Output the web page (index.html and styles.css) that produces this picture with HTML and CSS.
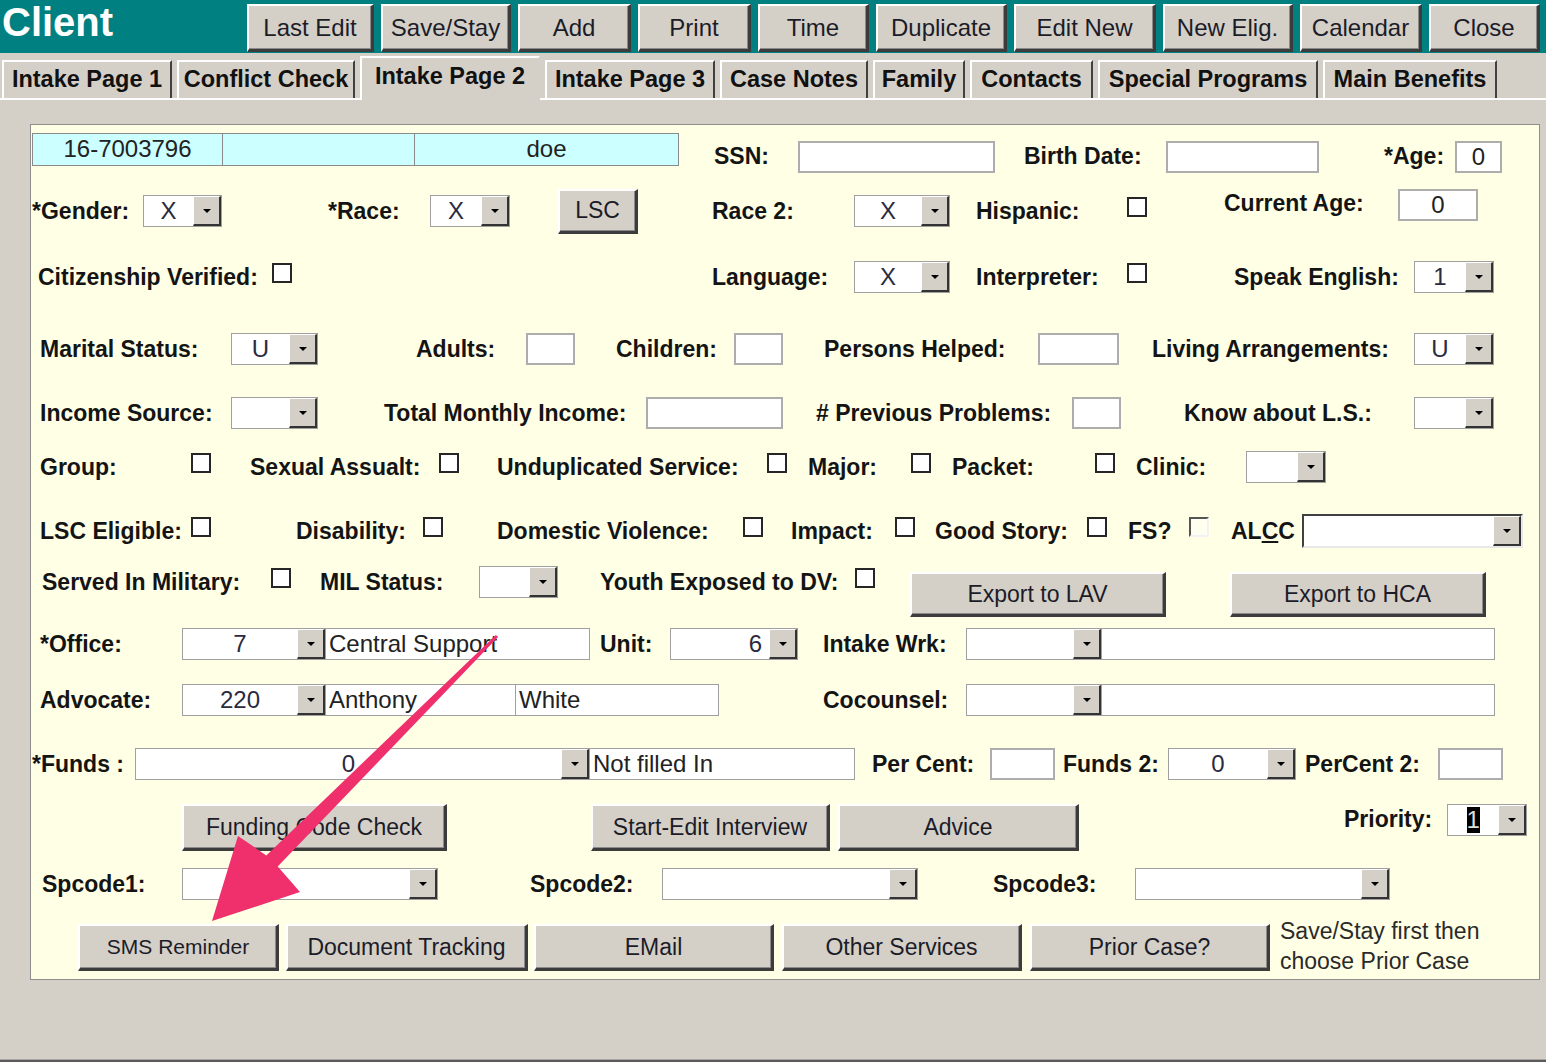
FILE: index.html
```html
<!DOCTYPE html>
<html>
<head>
<meta charset="utf-8">
<title>Client</title>
<link rel="stylesheet" href="styles.css">
</head>
<body>
<div class="topbar">
  <div class="title">Client</div>
  <div class="toolbar">
    <div class="btn tb">Last Edit</div>
    <div class="btn tb">Save/Stay</div>
    <div class="btn tb">Add</div>
    <div class="btn tb">Print</div>
    <div class="btn tb">Time</div>
    <div class="btn tb">Duplicate</div>
    <div class="btn tb">Edit New</div>
    <div class="btn tb">New Elig.</div>
    <div class="btn tb">Calendar</div>
    <div class="btn tb">Close</div>
  </div>
</div>

<div class="tabs">
  <div class="tab">Intake Page 1</div>
  <div class="tab">Conflict Check</div>
  <div class="tab sel-tab">Intake Page 2</div>
  <div class="tab">Intake Page 3</div>
  <div class="tab">Case Notes</div>
  <div class="tab">Family</div>
  <div class="tab">Contacts</div>
  <div class="tab">Special Programs</div>
  <div class="tab">Main Benefits</div>
  <div class="tab-fill"></div>
</div>

<div class="panel">
  <div class="row r1">
    <div class="idrow"><div class="idc c1">16-7003796</div><div class="idc c2"></div><div class="idc c3">doe</div></div>
    <span class="lb">SSN:</span>
    <div class="inp w197 end"></div>
    <span class="lb">Birth Date:</span>
    <div class="inp w153 end"></div>
    <span class="lb">*Age:</span>
    <div class="inp w47 end">0</div>
  </div>

  <div class="row r2">
    <span class="lb">*Gender:</span>
    <div class="sel w79"><span class="v">X</span><span class="dd"></span></div>
    <span class="lb">*Race:</span>
    <div class="sel w80"><span class="v">X</span><span class="dd"></span></div>
    <div class="btn w80 h45">LSC</div>
    <span class="lb">Race 2:</span>
    <div class="sel w96"><span class="v">X</span><span class="dd"></span></div>
    <span class="lb">Hispanic:</span>
    <div class="cb"></div>
    <span class="lb up8">Current Age:</span>
    <div class="inp w80 up6">0</div>
  </div>

  <div class="row r3">
    <span class="lb">Citizenship Verified:</span>
    <div class="cb"></div>
    <span class="lb">Language:</span>
    <div class="sel w96"><span class="v">X</span><span class="dd"></span></div>
    <span class="lb">Interpreter:</span>
    <div class="cb"></div>
    <span class="lb">Speak English:</span>
    <div class="sel w80"><span class="v">1</span><span class="dd"></span></div>
  </div>

  <div class="row r4">
    <span class="lb">Marital Status:</span>
    <div class="sel w87"><span class="v">U</span><span class="dd"></span></div>
    <span class="lb">Adults:</span>
    <div class="inp w49"></div>
    <span class="lb">Children:</span>
    <div class="inp w49"></div>
    <span class="lb">Persons Helped:</span>
    <div class="inp w81"></div>
    <span class="lb">Living Arrangements:</span>
    <div class="sel w80"><span class="v">U</span><span class="dd"></span></div>
  </div>

  <div class="row r5">
    <span class="lb">Income Source:</span>
    <div class="sel w87"><span class="v"></span><span class="dd"></span></div>
    <span class="lb">Total Monthly Income:</span>
    <div class="inp w137"></div>
    <span class="lb"># Previous Problems:</span>
    <div class="inp w49"></div>
    <span class="lb">Know about L.S.:</span>
    <div class="sel w80"><span class="v"></span><span class="dd"></span></div>
  </div>

  <div class="row r6">
    <span class="lb">Group:</span>
    <div class="cb"></div>
    <span class="lb">Sexual Assualt:</span>
    <div class="cb"></div>
    <span class="lb">Unduplicated Service:</span>
    <div class="cb"></div>
    <span class="lb">Major:</span>
    <div class="cb"></div>
    <span class="lb">Packet:</span>
    <div class="cb"></div>
    <span class="lb">Clinic:</span>
    <div class="sel w80"><span class="v"></span><span class="dd"></span></div>
  </div>

  <div class="row r7">
    <span class="lb">LSC Eligible:</span>
    <div class="cb"></div>
    <span class="lb">Disability:</span>
    <div class="cb"></div>
    <span class="lb">Domestic Violence:</span>
    <div class="cb"></div>
    <span class="lb">Impact:</span>
    <div class="cb"></div>
    <span class="lb">Good Story:</span>
    <div class="cb"></div>
    <span class="lb">FS?</span>
    <div class="cb dis"></div>
    <span class="lb">AL<u>C</u>C</span>
    <div class="sel sunken w221"><span class="v"></span><span class="dd"></span></div>
  </div>

  <div class="row r8">
    <span class="lb">Served In Military:</span>
    <div class="cb"></div>
    <span class="lb">MIL Status:</span>
    <div class="sel w79"><span class="v"></span><span class="dd"></span></div>
    <span class="lb">Youth Exposed to DV:</span>
    <div class="cb"></div>
    <div class="btn w256 h45 down">Export to LAV</div>
    <div class="btn w256 h45 down">Export to HCA</div>
  </div>

  <div class="row r9">
    <span class="lb">*Office:</span>
    <div class="combo">
      <div class="sel w144"><span class="v">7</span><span class="dd"></span></div>
      <div class="txt w264">Central Support</div>
    </div>
    <span class="lb">Unit:</span>
    <div class="sel w128"><span class="v right">6</span><span class="dd"></span></div>
    <span class="lb">Intake Wrk:</span>
    <div class="combo">
      <div class="sel w136"><span class="v"></span><span class="dd"></span></div>
      <div class="txt w393"></div>
    </div>
  </div>

  <div class="row r10">
    <span class="lb">Advocate:</span>
    <div class="combo">
      <div class="sel w144"><span class="v">220</span><span class="dd"></span></div>
      <div class="txt w190">Anthony</div>
      <div class="txt w203">White</div>
    </div>
    <span class="lb">Cocounsel:</span>
    <div class="combo">
      <div class="sel w136"><span class="v"></span><span class="dd"></span></div>
      <div class="txt w393"></div>
    </div>
  </div>

  <div class="row r11">
    <span class="lb">*Funds :</span>
    <div class="combo">
      <div class="sel w455"><span class="v">0</span><span class="dd"></span></div>
      <div class="txt w265">Not filled In</div>
    </div>
    <span class="lb">Per Cent:</span>
    <div class="inp w65"></div>
    <span class="lb">Funds 2:</span>
    <div class="sel w128"><span class="v">0</span><span class="dd"></span></div>
    <span class="lb">PerCent 2:</span>
    <div class="inp w65"></div>
  </div>

  <div class="row r12">
    <div class="btn w265 h47">Funding Code Check</div>
    <div class="btn w239 h47">Start-Edit Interview</div>
    <div class="btn w241 h47">Advice</div>
    <span class="lb prio">Priority:</span>
    <div class="sel w80 top"><span class="v"><span class="hl">1</span></span><span class="dd"></span></div>
  </div>

  <div class="row r13">
    <span class="lb">Spcode1:</span>
    <div class="sel w256"><span class="v"></span><span class="dd"></span></div>
    <span class="lb">Spcode2:</span>
    <div class="sel w256"><span class="v"></span><span class="dd"></span></div>
    <span class="lb">Spcode3:</span>
    <div class="sel w255"><span class="v"></span><span class="dd"></span></div>
  </div>

  <div class="row r14">
    <div class="btn w201 h47 small">SMS Reminder</div>
    <div class="btn w242 h47">Document Tracking</div>
    <div class="btn w240 h47">EMail</div>
    <div class="btn w240 h47">Other Services</div>
    <div class="btn w240 h47">Prior Case?</div>
    <div class="note">Save/Stay first then<br>choose Prior Case</div>
  </div>
</div>

<svg class="arrow" width="1546" height="1062" viewBox="0 0 1546 1062">
  <polygon points="495.9,634.9 266.3,855.4 238,836 212,921 300,892 277.7,866.6 498.1,637.1" fill="#ef306c"/>
</svg>
</body>
</html>
```
FILE: styles.css
```css
* { box-sizing: border-box; }
html, body { margin: 0; padding: 0; }
body {
  width: 1546px;
  height: 1062px;
  background: #d4d0c8;
  font-family: "Liberation Sans", Arial, sans-serif;
  color: #111;
  position: relative;
  overflow: hidden;
  border-bottom: 2px solid #5a5a5a;
  box-shadow: inset 0 -1px 0 #a4a4a4;
}

/* ---------- top bar ---------- */
.topbar {
  display: flex;
  height: 53px;
  background: #008080;
}
.title {
  width: 247px;
  padding-left: 2px;
  font-size: 40px;
  font-weight: bold;
  line-height: 44px;
  color: #fff;
}
.toolbar {
  display: grid;
  grid-template-columns: 127px 130px 113px 113px 111px 131px 142px 130px 122px 111px;
  column-gap: 7px;
  padding-top: 4px;
}
.btn {
  display: flex;
  align-items: center;
  justify-content: center;
  background: #d4d0c8;
  border-style: solid;
  border-width: 2px 3px 3px 2px;
  border-color: #fff #3c3c3c #3c3c3c #fff;
  box-shadow: inset -1px -1px 0 #8a8a8a;
  font-size: 23px;
  color: #1c1c28;
  white-space: nowrap;
}
.tb { height: 48px; font-size: 24px; }

/* ---------- tabs ---------- */
.tabs {
  display: grid;
  grid-template-columns: 170px 178px 180px 170px 148px 92px 123px 220px 174px 1fr;
  column-gap: 5px;
  align-items: end;
  height: 44px;
  margin-top: 3px;
  padding-left: 2px;
  border-bottom: 2px solid #fff;
}
.tab {
  height: 38px;
  border-style: solid;
  border-width: 2px 2px 0 2px;
  border-color: #fff #404040 #fff #fff;
  background: #d4d0c8;
  font-size: 23.5px;
  font-weight: bold;
  line-height: 34px;
  text-align: center;
  white-space: nowrap;
}
.sel-tab {
  height: 44px;
  margin-bottom: -2px;
  border-right-color: #d4d0c8;
  line-height: 36px;
}
.tab-fill { height: 38px; }

/* ---------- panel ---------- */
.panel {
  margin: 24px 0 0 30px;
  width: 1510px;
  height: 856px;
  background: #ffffe6;
  border: 1px solid #8e8e8e;
  padding-top: 8px;
}
.row {
  display: grid;
  grid-template-rows: 100%;
  align-items: center;
  justify-items: start;
}
.r1 { height: 40px; padding-left: 1px; grid-template-columns: 682px 84px 226px 142px 218px 71px auto; }
.r2 { height: 50px; margin-top: 13px; padding-left: 1px; grid-template-columns: 111px 185px 102px 128px 154px 142px 122px 151px 97px 174px auto; }
.r3 { height: 42px; margin-top: 20px; padding-left: 7px; grid-template-columns: 234px 440px 142px 122px 151px 107px 180px auto; }
.r4 { height: 42px; margin-top: 30px; padding-left: 9px; grid-template-columns: 191px 185px 110px 90px 118px 90px 214px 114px 262px auto; }
.r5 { height: 42px; margin-top: 22px; padding-left: 9px; grid-template-columns: 191px 153px 262px 170px 256px 112px 230px auto; }
.r6 { height: 42px; margin-top: 12px; padding-left: 9px; grid-template-columns: 151px 59px 189px 58px 270px 41px 103px 41px 143px 41px 110px auto; }
.r7 { height: 42px; margin-top: 22px; padding-left: 9px; grid-template-columns: 151px 105px 127px 74px 246px 48px 104px 40px 152px 41px 61px 42px 71px auto; }
.r8 { height: 44px; margin-top: 8px; padding-left: 11px; grid-template-columns: 229px 49px 159px 121px 255px 55px 320px auto; }
.r9 { height: 40px; margin-top: 20px; padding-left: 9px; grid-template-columns: 142px 418px 70px 153px 143px auto; }
.r10 { height: 40px; margin-top: 16px; padding-left: 9px; grid-template-columns: 142px 641px 143px auto; }
.r11 { height: 40px; margin-top: 24px; padding-left: 1px; grid-template-columns: 103px 737px 118px 73px 105px 137px 133px auto; }
.r12 { height: 48px; margin-top: 20px; padding-left: 151px; grid-template-columns: 409px 247px 506px 103px auto; align-items: start; }
.r13 { height: 40px; margin-top: 12px; padding-left: 11px; grid-template-columns: 140px 348px 132px 331px 142px auto; }
.r14 { height: 48px; margin-top: 20px; padding-left: 47px; grid-template-columns: 208px 248px 248px 248px 250px auto; align-items: start; }

.lb {
  font-size: 23px;
  font-weight: bold;
  white-space: nowrap;
  color: #141414;
}
.r1 .lb { margin-top: 6px; }
.end { align-self: end; }
.up8 { margin-bottom: 16px; }
.up6 { margin-bottom: 12px; }
.down { align-self: start; margin-top: 12px; }
.prio { margin-top: 2px; }

/* id strip */
.idrow {
  display: flex;
  align-self: start;
  width: 647px;
  height: 33px;
  background: #ccffff;
  border: 1px solid #8a8a8a;
}
.idc {
  height: 100%;
  border-right: 1px solid #8a8a8a;
  font-size: 24px;
  line-height: 30px;
  text-align: center;
  color: #222;
}
.c1 { width: 190px; }
.c2 { width: 192px; }
.c3 { flex: 1; border-right: none; }

/* text inputs */
.inp {
  height: 32px;
  background: #fff;
  border: 2px solid #adadad;
  font-size: 24px;
  line-height: 28px;
  text-align: center;
  color: #222;
}
.txt {
  height: 32px;
  background: #fff;
  border: 1px solid #a0a0a0;
  border-left: none;
  padding-left: 3px;
  font-size: 24px;
  line-height: 30px;
  color: #222;
  white-space: nowrap;
  overflow: hidden;
}
.combo { display: flex; }

/* dropdowns */
.sel {
  display: flex;
  height: 32px;
  background: #fff;
  border: 1px solid #a0a0a0;
  font-size: 24px;
}
.sel .v {
  flex: 1;
  text-align: center;
  line-height: 30px;
  color: #2a2a40;
}
.sel .v.right { text-align: right; padding-right: 7px; }
.dd {
  width: 28px;
  display: flex;
  align-items: center;
  justify-content: center;
  background: #d4d0c8;
  border-style: solid;
  border-width: 1px 2px 2px 1px;
  border-color: #fff #333 #333 #fff;
}
.dd::after {
  content: "";
  border-left: 4px solid transparent;
  border-right: 4px solid transparent;
  border-top: 4px solid #000;
}
.sunken {
  height: 34px;
  border-width: 2px;
  border-color: #404040 #e8e8e8 #e8e8e8 #404040;
}
.top { align-self: start; }
.hl {
  display: inline-block;
  background: #000;
  color: #ddd;
  width: 13px;
  line-height: 26px;
  margin-top: 2px;
}

/* checkboxes */
.cb {
  width: 20px;
  height: 20px;
  background: #fff;
  border: 2px solid #262626;
  margin-bottom: 8px;
}
.cb.dis {
  border-color: #555 #f2f2f2 #f2f2f2 #555;
  background: #fffff0;
}

/* widths */
.w47 { width: 47px; }
.w49 { width: 49px; }
.w65 { width: 65px; }
.w79 { width: 79px; }
.w80 { width: 80px; }
.w81 { width: 81px; }
.w87 { width: 87px; }
.w96 { width: 96px; }
.w128 { width: 128px; }
.w136 { width: 136px; }
.w137 { width: 137px; }
.w144 { width: 144px; }
.w153 { width: 153px; }
.w190 { width: 190px; }
.w197 { width: 197px; }
.w201 { width: 201px; }
.w203 { width: 203px; }
.w221 { width: 221px; }
.w239 { width: 239px; }
.w240 { width: 240px; }
.w241 { width: 241px; }
.w242 { width: 242px; }
.w255 { width: 255px; }
.w256 { width: 256px; }
.w264 { width: 264px; }
.w265 { width: 265px; }
.w393 { width: 393px; }
.w455 { width: 455px; }
.h45 { height: 45px; }
.h47 { height: 47px; }
.small { font-size: 21px; }

.note {
  margin-top: -8px;
  font-size: 23px;
  line-height: 30px;
  color: #2a2a2a;
  white-space: nowrap;
}

/* annotation arrow */
.arrow {
  position: absolute;
  left: 0;
  top: 0;
  pointer-events: none;
}
```
